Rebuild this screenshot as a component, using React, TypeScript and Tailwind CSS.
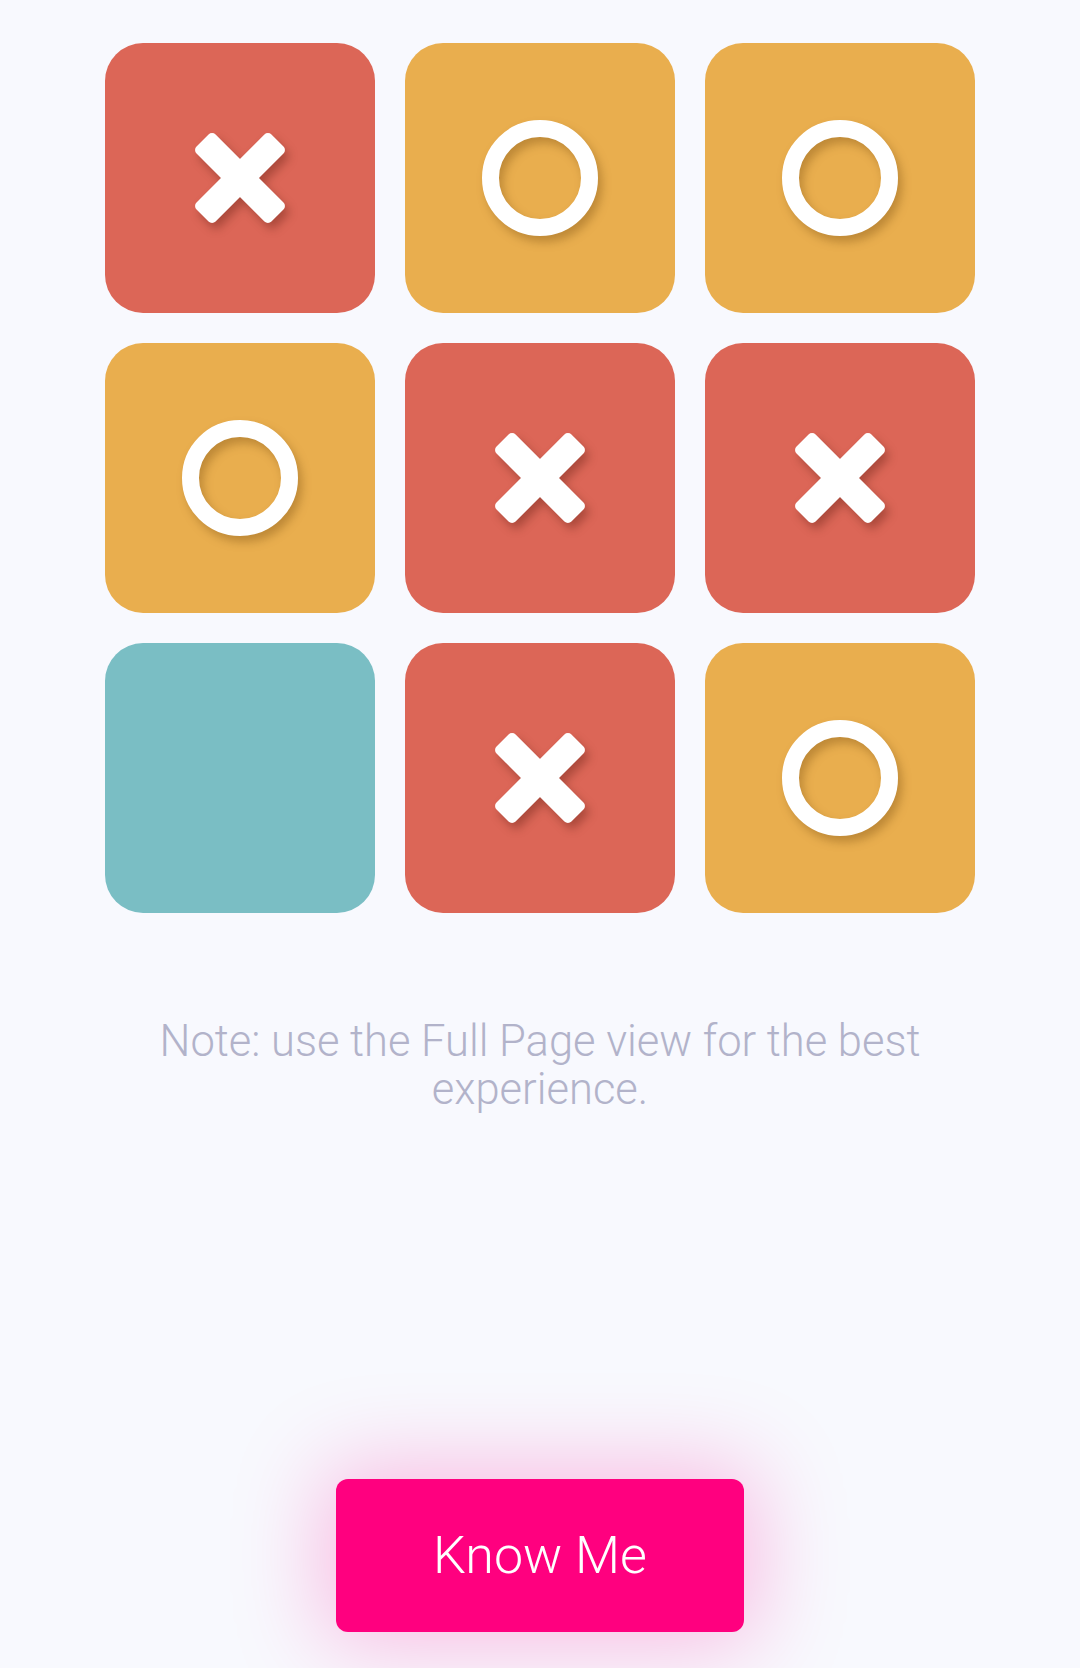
import React from "react";

type Mark = "x" | "o" | "";

const cells: Mark[] = ["x", "o", "o", "o", "x", "x", "", "x", "o"];

function XMark() {
  return (
    <div className="relative w-[92px] h-[92px] drop-shadow-[4px_6px_5px_rgba(80,20,10,0.35)]">
      <div className="absolute left-1/2 top-1/2 w-[106px] h-[27px] -translate-x-1/2 -translate-y-1/2 rotate-45 rounded-[5px] bg-white" />
      <div className="absolute left-1/2 top-1/2 w-[106px] h-[27px] -translate-x-1/2 -translate-y-1/2 -rotate-45 rounded-[5px] bg-white" />
    </div>
  );
}

function OMark() {
  return (
    <div className="w-[116px] h-[116px] rounded-full border-[17px] border-white drop-shadow-[4px_6px_5px_rgba(90,50,0,0.3)]" />
  );
}

export default function App() {
  return (
    <div
      className="min-h-[1668px] w-full bg-[#f8f9fe] flex flex-col items-center"
      style={{ fontFamily: "Roboto, 'Noto Sans', sans-serif" }}
    >
      <div className="mt-[43px] grid grid-cols-[repeat(3,270px)] gap-[30px]">
        {cells.map((c, i) => {
          const bg =
            c === "x" ? "bg-[#dc6657]" : c === "o" ? "bg-[#e9ae4e]" : "bg-[#7abec4]";
          return (
            <div
              key={i}
              className={`w-[270px] h-[270px] rounded-[38px] ${bg} flex items-center justify-center`}
            >
              {c === "x" && <XMark />}
              {c === "o" && <OMark />}
            </div>
          );
        })}
      </div>
      <p className="mt-[105px] w-[840px] text-center text-[43.5px] font-light leading-[48px] text-[#b2b3ca]">
        Note: use the Full Page view for the best experience.
      </p>
      <button className="mt-[365px] w-[408px] h-[153px] rounded-[12px] bg-[#ff007f] text-white text-[52px] font-light shadow-[0_0_90px_12px_rgba(255,0,140,0.25)]">
        Know Me
      </button>
    </div>
  );
}
